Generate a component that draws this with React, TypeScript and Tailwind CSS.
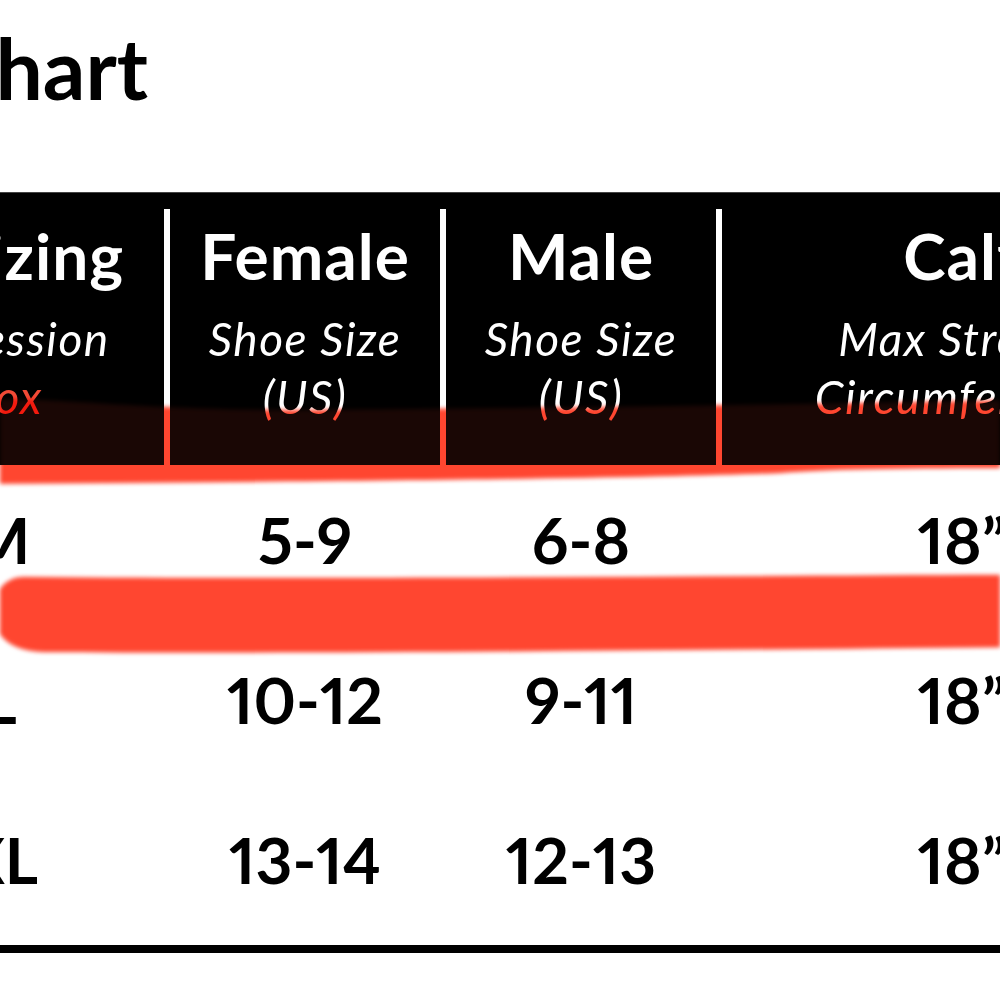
const rows = [
  { size: 'M', female: '5-9', male: '6-8', calf: '18”' },
  { size: 'L', female: '10-12', male: '9-11', calf: '18”' },
  { size: 'XL', female: '13-14', male: '12-13', calf: '18”' },
];

function Divider() {
  return <div className="w-[6px] shrink-0 bg-white mt-[16px]" />;
}

function Spacer() {
  return <div className="w-[6px] shrink-0" />;
}

function HeadCell({
  width,
  title,
  lines,
  redLast,
  titleClass = '',
}: {
  width: string;
  title: string;
  lines: string[];
  redLast?: boolean;
  titleClass?: string;
}) {
  return (
    <div className={`${width} shrink-0 flex flex-col items-center pt-[31px] whitespace-nowrap`}>
      <div className={`text-[64px] font-bold leading-none tracking-[1px] text-white ${titleClass}`}>{title}</div>
      <div className="mt-[22px] flex flex-col items-center text-[46px] italic leading-[58px] tracking-[1.5px] text-white">
        {lines.map((l, i) => (
          <span key={i} className={redLast && i === lines.length - 1 ? 'text-[#f24a36]' : ''}>
            {l}
          </span>
        ))}
      </div>
    </div>
  );
}

// highlighter marks drawn over the chart
function Strokes({ className }: { className: string }) {
  return (
    <svg className={className} width="1000" height="1000" viewBox="0 0 1000 1000">
      <path
        fill="#ff4630"
        d="M -30 400 C 60 396, 120 410, 300 410 C 600 408, 800 404, 1030 400 L 1030 468 C 900 468, 830 469, 780 473 C 650 478, 400 481, -30 484 Z"
      />
      <path
        fill="#ff4630"
        d="M 24 577 C 300 580, 700 576, 1030 575 L 1030 647 C 700 650, 300 654, 44 652 C 12 651, -6 638, -6 612 C -6 590, 6 577, 24 577 Z"
      />
    </svg>
  );
}

export default function App() {
  return (
    <div className="relative w-[1000px] h-[1000px] overflow-hidden bg-white font-['Lato',sans-serif] text-black">
      <div className="ml-[-164px] w-[1400px]">
        <div className="flex justify-end w-[312px] pt-[26px]">
          <h1 className="shrink-0 whitespace-nowrap text-[84px] font-bold leading-none">Size Chart</h1>
        </div>

        <div className="mt-[82px] h-[273px] bg-black flex border-t border-[#444]">
          <div className="w-[328px] shrink-0 flex justify-center pr-[42px]">
            <HeadCell
              width="w-[286px]"
              title="Sock Sizing"
              titleClass="mr-[40px]"
              lines={['Compression', 'In Box']}
              redLast
            />
          </div>
          <Divider />
          <HeadCell width="w-[270px]" title="Female" lines={['Shoe Size', '(US)']} />
          <Divider />
          <HeadCell width="w-[270px]" title="Male" lines={['Shoe Size', '(US)']} />
          <Divider />
          <HeadCell width="w-[480px]" title="Calf" lines={['Max Stretch', 'Circumference']} />
        </div>

        {rows.map((r) => (
          <div
            key={r.size}
            className="flex h-[160px] pt-[43px] text-[64px] font-bold leading-none whitespace-nowrap proportional-nums"
          >
            <div className="w-[328px] shrink-0 text-center">{r.size}</div>
            <Spacer />
            <div className="w-[270px] shrink-0 text-center">{r.female}</div>
            <Spacer />
            <div className="w-[270px] shrink-0 text-center">{r.male}</div>
            <Spacer />
            <div className="w-[480px] shrink-0 text-center">{r.calf}</div>
          </div>
        ))}

        <div className="h-[8px] bg-black" />
      </div>

      <Strokes className="absolute left-0 top-0 pointer-events-none mix-blend-multiply blur-[2px]" />
      <Strokes className="absolute left-0 top-0 pointer-events-none opacity-10 blur-[2px]" />
    </div>
  );
}
